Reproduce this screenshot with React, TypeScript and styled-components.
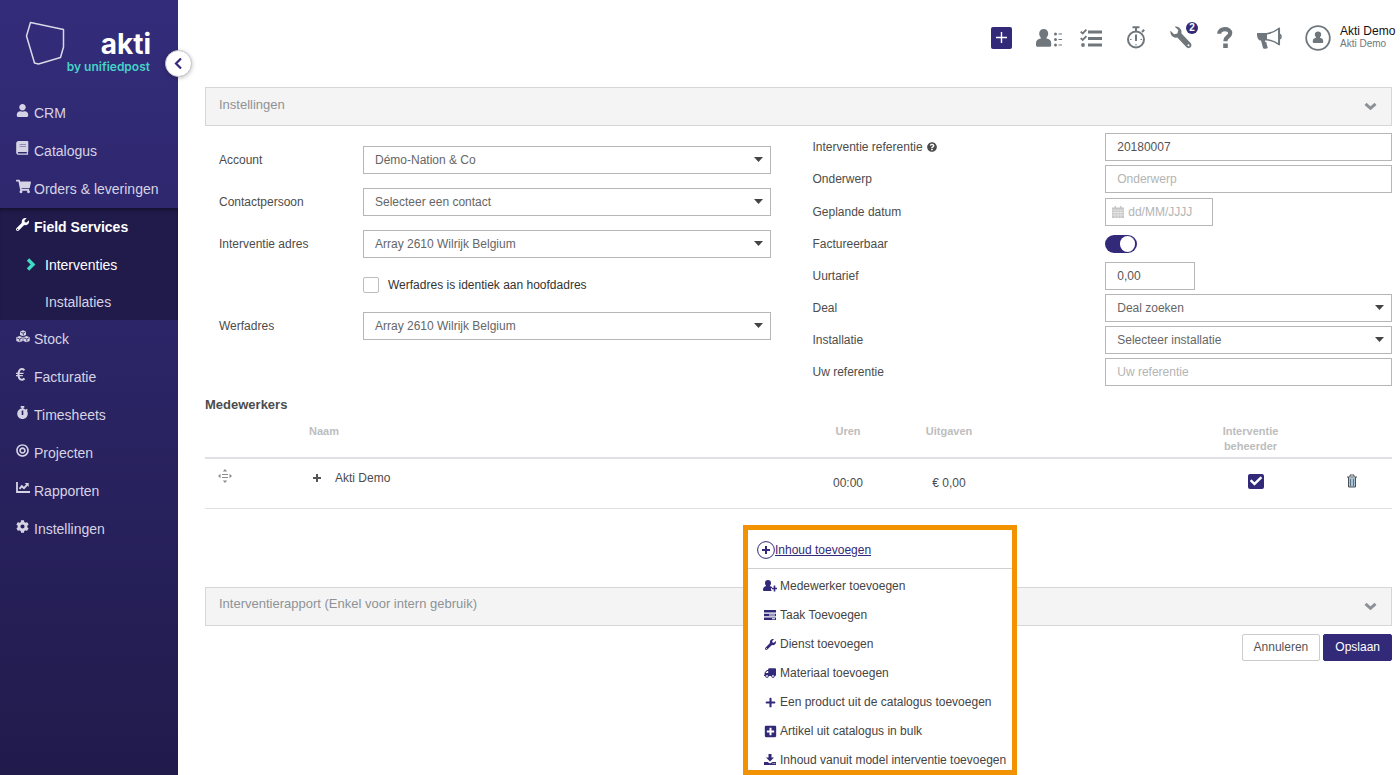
import React from "react";
import styled, { createGlobalStyle } from "styled-components";
import {
  FaUser,
  FaShoppingCart,
  FaWrench,
  FaStopwatch,
  FaBullseye,
  FaCog,
  FaTruck,
  FaPlus,
  FaPlusSquare,
  FaQuestionCircle,
  FaCheck,
} from "react-icons/fa";

const indigo = "#322a78";
const grey = "#6f777d";

const GlobalStyle = createGlobalStyle`
  *, *::before, *::after { box-sizing: border-box; }
  body {
    margin: 0;
    background: #fff;
    color: #4c4c4c;
    font-family: "Liberation Sans", Arial, sans-serif;
    font-size: 12px;
    line-height: 16px;
  }
  button, input, select { font: inherit; color: inherit; }
  button { cursor: pointer; }
`;

const Layout = styled.div`
  display: flex;
  min-height: 100vh;
`;

/* ---------- Sidebar ---------- */

const Sidebar = styled.aside`
  position: relative;
  flex: 0 0 178px;
  background: linear-gradient(#332c7a 0, #312a75 100px, #211b4c 100%);
`;

const Logo = styled.a`
  display: block;
  height: 94px;
`;

const LogoSvg = styled.svg`
  display: block;
`;

const CollapseButton = styled.button`
  position: absolute;
  top: 50px;
  right: -14px;
  width: 27px;
  height: 27px;
  display: grid;
  place-items: center;
  padding: 0;
  border: 1px solid #c4c4cc;
  border-radius: 50%;
  background: #fff;
  color: ${indigo};
  box-shadow: 0 1px 4px rgba(0, 0, 0, 0.25);
`;

const NavList = styled.ul`
  margin: 0;
  padding: 0;
  list-style: none;
`;

const NavGroup = styled.li<{ $active?: boolean }>`
  background: ${(p) => (p.$active ? "#211b4b" : "transparent")};
  box-shadow: ${(p) => (p.$active ? "inset 0 4px 4px -2px rgba(0, 0, 0, 0.4)" : "none")};
`;

const NavLink = styled.a<{ $active?: boolean }>`
  display: flex;
  align-items: center;
  height: 38px;
  padding-left: 16px;
  color: ${(p) => (p.$active ? "#fff" : "#d6d4e4")};
  font-size: 14px;
  font-weight: ${(p) => (p.$active ? "bold" : "normal")};
  text-decoration: none;
  white-space: nowrap;
`;

const NavIcon = styled.span`
  display: flex;
  width: 18px;
  padding-bottom: 6px;
  font-size: 13px;
`;

const SubLink = styled.a<{ $active?: boolean }>`
  display: flex;
  align-items: center;
  height: 37px;
  padding-left: 26px;
  color: ${(p) => (p.$active ? "#fff" : "#d6d4e4")};
  font-size: 14px;
  text-decoration: none;
`;

const SubMarker = styled.span`
  display: flex;
  width: 19px;
  color: #3fd9c6;
`;

/* ---------- Top bar ---------- */

const Main = styled.main`
  flex: 1;
  min-width: 0;
`;

const TopBar = styled.header`
  display: flex;
  justify-content: flex-end;
  align-items: center;
  height: 87px;
  padding: 0 5px 12px 0;
  color: ${grey};
`;

const TopButton = styled.button<{ $width: number; $gap: number }>`
  position: relative;
  display: flex;
  justify-content: center;
  width: ${(p) => p.$width}px;
  margin-right: ${(p) => p.$gap}px;
  padding: 0;
  border: 0;
  background: none;
`;

const AddButton = styled(TopButton)`
  height: 22px;
  align-items: center;
  border-radius: 2px;
  background: ${indigo};
`;

const Badge = styled.span`
  position: absolute;
  top: -4px;
  right: -6px;
  width: 12px;
  height: 12px;
  border-radius: 50%;
  background: ${indigo};
  color: #fff;
  font-size: 10px;
  font-weight: bold;
  line-height: 12px;
  text-align: center;
`;

const UserNames = styled.div`
  display: flex;
  flex-direction: column;
  width: 55px;
  padding-bottom: 2px;
  color: ${grey};
  font-size: 10px;
  line-height: 12px;
  white-space: nowrap;
`;

const UserName = styled.span`
  color: #111;
  font-size: 12px;
  line-height: 14px;
`;

/* ---------- Content ---------- */

const Content = styled.div`
  padding: 0 8px 0 27px;
`;

const PanelHeader = styled.button`
  display: flex;
  justify-content: space-between;
  align-items: center;
  width: 100%;
  height: 39px;
  padding: 0 14px 0 13px;
  border: 1px solid #d5d6d8;
  background: #f4f4f4;
  color: #8e9296;
  text-align: left;
  font-size: 13px;
`;

const PanelTitle = styled.span`
  padding-bottom: 4px;
`;

const FormGrid = styled.div`
  display: grid;
  grid-template-columns: 1fr 1fr;
  padding-top: 7px;
`;

const LeftColumn = styled.div`
  display: flex;
  flex-direction: column;
  gap: 14px;
  padding: 13px 28px 0 14px;
`;

const RightColumn = styled.div`
  display: flex;
  flex-direction: column;
  gap: 4px;
  padding-left: 14px;
`;

const LeftRow = styled.div`
  display: grid;
  grid-template-columns: 144px 1fr;
  align-items: center;
`;

const RightRow = styled.div`
  display: grid;
  grid-template-columns: 1fr 1fr;
  column-gap: 6px;
  align-items: center;
  min-height: 28px;
`;

const DateRow = styled(RightRow)`
  min-height: 29px;
  align-items: end;
`;

const Label = styled.label`
  display: flex;
  align-items: center;
  gap: 4px;
  line-height: 28px;
`;

const CheckLine = styled.div`
  grid-column: 2;
  display: flex;
  align-items: center;
  gap: 9px;
  height: 26px;
  color: #333;
`;

const CheckBox = styled.input`
  appearance: none;
  width: 16px;
  height: 16px;
  margin: 0;
  border: 1px solid #bdbdbd;
  border-radius: 2px;
  background: #fff;
`;

const SelectWrap = styled.div`
  position: relative;
  min-width: 0;
`;

const SelectBox = styled.select`
  appearance: none;
  display: block;
  width: 100%;
  height: 28px;
  padding: 0 28px 0 11px;
  border: 1px solid #b6b6b6;
  border-radius: 0;
  background: #fff;
  color: #666;
`;

const Caret = styled.svg`
  position: absolute;
  top: 11px;
  right: 8px;
  pointer-events: none;
`;

const TextBox = styled.input<{ $width?: number }>`
  width: ${(p) => (p.$width ? `${p.$width}px` : "100%")};
  height: 28px;
  padding: 0 11px;
  border: 1px solid #b6b6b6;
  border-radius: 0;
  background: #fff;
  color: #555;
  &::placeholder { color: #b4b4b4; opacity: 1; }
`;

const DateBox = styled.div`
  display: flex;
  align-items: center;
  gap: 4px;
  width: 108px;
  height: 28px;
  padding: 0 6px;
  border: 1px solid #b6b6b6;
`;

const DateInput = styled.input`
  flex: 1;
  min-width: 0;
  padding: 0;
  border: 0;
  outline: 0;
  background: none;
  &::placeholder { color: #b4b4b4; opacity: 1; }
`;

const Switch = styled.input`
  appearance: none;
  display: flex;
  align-items: center;
  justify-content: flex-end;
  width: 32px;
  height: 18px;
  margin: 0;
  padding: 0 2px;
  border-radius: 9px;
  background: ${indigo};
  &::before {
    content: "";
    width: 15px;
    height: 16px;
    border-radius: 8px;
    background: #fff;
  }
  &:not(:checked) {
    justify-content: flex-start;
    background: #bbb;
  }
`;

/* ---------- Staff table ---------- */

const SectionTitle = styled.h2`
  margin: 11px 0 0;
  font-size: 13px;
  line-height: 16px;
`;

const Table = styled.table`
  width: 100%;
  margin-top: 7px;
  border-collapse: collapse;
  table-layout: fixed;
`;

const Th = styled.th<{ $left?: boolean }>`
  padding: 4px 0 3px;
  border-bottom: 2px solid #dfdfe4;
  color: #bdbdbd;
  font-size: 11px;
  line-height: 15px;
  text-align: ${(p) => (p.$left ? "left" : "center")};
  vertical-align: top;
`;

const Td = styled.td`
  height: 50px;
  padding: 0;
  border-bottom: 1px solid #dfdfe4;
  text-align: center;
  vertical-align: middle;
`;

const DragTd = styled(Td)`
  padding: 0 0 10px 12px;
  text-align: left;
`;

const NameTd = styled(Td)`
  padding: 0 0 11px 4px;
  text-align: left;
`;

const NameLine = styled.div`
  display: flex;
  align-items: center;
  gap: 14px;
`;

const IconButton = styled.button`
  display: inline-flex;
  padding: 0;
  border: 0;
  background: none;
  color: #555;
`;

const ManagerTd = styled(Td)`
  padding-left: 11px;
`;

const ManagerLabel = styled.label`
  position: relative;
  display: inline-grid;
  color: #fff;
`;

const ManagerCheck = styled.input`
  appearance: none;
  width: 16px;
  height: 15px;
  margin: 0;
  border-radius: 2px;
  background: ${indigo};
`;

const CheckMark = styled.span`
  position: absolute;
  top: 1px;
  left: 2px;
  display: flex;
  font-size: 12px;
  pointer-events: none;
`;

/* ---------- Add-content menu ---------- */

const MenuAnchor = styled.div`
  position: relative;
  height: 78px;
`;

const Menu = styled.div`
  position: absolute;
  z-index: 2;
  top: 16px;
  left: 538px;
  width: 274px;
  border: 5px solid #f39200;
  background: #fff;
`;

const MenuToggle = styled.button`
  display: flex;
  align-items: center;
  width: 100%;
  height: 39px;
  padding: 2px 9px 0;
  border: 0;
  border-bottom: 1px solid #d0d0d4;
  background: none;
  color: ${indigo};
  text-decoration: underline;
`;

const MenuList = styled.ul`
  display: flex;
  flex-direction: column;
  gap: 12px;
  margin: 0;
  padding: 9px 0 1px;
  list-style: none;
`;

const MenuAction = styled.button`
  display: flex;
  align-items: center;
  gap: 3px;
  width: 100%;
  height: 17px;
  padding: 0 0 0 15px;
  border: 0;
  background: none;
  color: #444;
  white-space: nowrap;
`;

const MenuIcon = styled.span`
  display: flex;
  justify-content: center;
  width: 14px;
  color: ${indigo};
  font-size: 12px;
`;

const MirroredTruck = styled(FaTruck)`
  transform: scaleX(-1);
`;

const Actions = styled.div`
  display: flex;
  justify-content: flex-end;
  gap: 3px;
  padding-top: 8px;
`;

const ActionButton = styled.button<{ $primary?: boolean }>`
  height: 27px;
  padding: 0 11px;
  border: 1px solid ${(p) => (p.$primary ? indigo : "#ccc")};
  border-radius: 2px;
  background: ${(p) => (p.$primary ? indigo : "#fff")};
  color: ${(p) => (p.$primary ? "#fff" : "#555")};
`;

/* ---------- Drawn icons ---------- */

const ChevronDown = () => (
  <svg width="13" height="9" viewBox="0 0 13 9">
    <path d="M1.500 1.800 6.500 6.300 11.500 1.800" fill="none" stroke="#8b9196" strokeWidth="3" />
  </svg>
);

const ChevronRight = () => (
  <svg width="10" height="13" viewBox="0 0 10 13">
    <path d="M2 1.500 7 6.500 2 11.500" fill="none" stroke="currentColor" strokeWidth="3.400" />
  </svg>
);

const ChevronLeft = () => (
  <svg width="9" height="13" viewBox="0 0 9 13">
    <path d="M7 1.500 2 6.500 7 11.500" fill="none" stroke="currentColor" strokeWidth="2.200" />
  </svg>
);

const BookIcon = () => (
  <svg width="13" height="14" viewBox="0 0 13 14" fill="currentColor">
    <path
      fillRule="evenodd"
      d="M2.500 0H11.500c.5 0 .8.300.8.800v9.400c0 .3-.1.500-.4.600v1.700c.3 0 .4.200.4.500 0 .5-.3.800-.8.800H2.500C1.200 13.800.2 12.800.2 11.500V2.300C.2 1 1.200 0 2.500 0Zm0 11c-.9 0-.9 1.500 0 1.500h8.300V11Z"
    />
    <path d="M3.500 3h6.500v1H3.500zM3.500 5h6.500v1H3.500z" fill="#8f8bb5" />
  </svg>
);

const CubesIcon = () => (
  <svg width="14" height="13" viewBox="0 0 14 13">
    <path
      d="M7 .3 10 1.500V5L7 6.300 4 5V1.500ZM3.500 6 6.700 7.300v3.600L3.500 12.300.3 10.900V7.300ZM10.500 6l3.200 1.300v3.600l-3.200 1.400-3.200-1.400V7.300Z"
      fill="currentColor"
    />
    <path d="M4.500 2 7 3.100 9.500 2M7.300 3.200v2.300M1 7.900l2.500 1.100L6 7.900M3.800 9v2.500M8 7.900 10.500 9 13 7.900M10.800 9v2.500" fill="none" stroke="#2c2569" strokeWidth=".8" />
  </svg>
);

const EuroIcon = () => (
  <svg width="9" height="13" viewBox="0 0 9 13" fill="none" stroke="currentColor">
    <path d="M8.500 2.300C7.600 1.300 6.600 1 5.800 1 3.700 1 2.500 3.200 2.500 6.300s1.200 5.500 3.300 5.500c1 0 1.800-.4 2.700-1.300" strokeWidth="2" />
    <path d="M0 5.300h7.500M0 7.600h6.800" strokeWidth="1.200" />
  </svg>
);

const ChartIcon = () => (
  <svg width="14" height="12" viewBox="0 0 14 12" fill="none" stroke="currentColor">
    <path d="M1 0v10h13" strokeWidth="1.800" />
    <path d="M3.500 6.800 5.800 4.200 8 6.200l3.200-3.500" strokeWidth="1.900" />
    <path d="M8.700 1H12.700v4Z" fill="currentColor" stroke="none" />
  </svg>
);

const ContactsIcon = () => (
  <svg width="27" height="18" viewBox="0 0 27 18" fill={grey}>
    <path d="M7.700 0C10.300 0 12.200 1.900 12.200 4.500c0 1.600-.7 3-1.700 3.900v1c3 .6 4.700 2 4.700 4.600v2.500c0 .8-.5 1.200-1.200 1.200H1.200C.5 17.700 0 17.300 0 16.500V14c0-2.600 1.800-4 4.800-4.600v-1c-1-.9-1.600-2.300-1.600-3.900C3.200 1.900 5.100 0 7.700 0Z" />
    <circle cx="19.500" cy="5" r="1.500" />
    <circle cx="19.500" cy="10.500" r="1.500" />
    <circle cx="19.500" cy="16" r="1.500" />
    <path d="M22.500 4.500H26v1h-3.500zM22.500 10H26v1h-3.500zM22.500 15.500H26v1h-3.500z" />
  </svg>
);

const ChecklistIcon = () => (
  <svg width="22" height="18" viewBox="0 0 22 18">
    <path d="M8 1.500h14v3H8zM8 8h14v3H8zM8 14.500h14v3H8z" fill={grey} />
    <circle cx="3" cy="16" r="1.900" fill={grey} />
    <path d="M.7 2.600l2 1.800L6.400.7M.7 9.100l2 1.800 3.700-3.700" fill="none" stroke={grey} strokeWidth="1.900" />
  </svg>
);

const TimerIcon = () => (
  <svg width="20" height="23" viewBox="0 0 20 23" fill="none" stroke={grey} strokeWidth="2">
    <circle cx="10" cy="13.500" r="8" />
    <path d="M6.500 1.200h7M10 1.500V5M16 6l2.200-2.200" />
    <path d="M10 8.500v6.500" />
    <path d="M4 13.500h1.500M14.500 13.500H16M10 18v1.500" strokeWidth="1" />
  </svg>
);

const ServiceIcon = () => (
  <svg width="22" height="23" viewBox="0 0 22 23" fill={grey}>
    <path
      fillRule="evenodd"
      d="M4.500.6C7.500-.2 10.500 1.600 11.300 4.500c.2 1 .2 1.900 0 2.800l9.300 9.800c1.100 1.200 1.100 3 0 4.200-1.200 1.100-3 1.100-4.100 0L7.300 11.600c-.9.2-1.800.2-2.700-.1C1.700 10.600-.1 7.700.5 4.800l3.600 3.500 3.300-.9.900-3.300L4.500.6Zm14 17.600a1 1 0 1 0 0 2 1 1 0 0 0 0-2Z"
    />
  </svg>
);

const QuestionIcon = () => (
  <svg width="16" height="21" viewBox="0 0 16 21">
    <path
      d="M2.200 6.800C2.200 3.700 4.700 2.200 7.800 2.200c3.200 0 5.400 1.500 5.400 4 0 3.300-4.700 3.500-4.700 7.300v.8"
      fill="none"
      stroke={grey}
      strokeWidth="4.200"
    />
    <path d="M6.200 16.500h4.600V21H6.200z" fill={grey} />
  </svg>
);

const MegaphoneIcon = () => (
  <svg width="26" height="22" viewBox="0 0 26 22">
    <path d="M1 6h10v7.500H9l.2 1.500 1.500.5-.2 1 1.300 4.500c-1 1-3.500 1-4.700.2L5 13.500H3.800C2 12.500.6 9.500 1 6Z" fill={grey} />
    <path d="M11 6.700C15.500 6 19.500 4 22.800 1.500v15.800C19.500 15 15.500 13.400 11 12.700" fill="none" stroke={grey} strokeWidth="1.500" />
    <path d="M23.300 1v17M23.500 7.500c2 0 2 4.200 0 4.200" fill="none" stroke={grey} strokeWidth="1.500" />
  </svg>
);

const AvatarIcon = () => (
  <svg width="26" height="26" viewBox="0 0 26 26">
    <circle cx="13" cy="13" r="11.800" fill="none" stroke={grey} strokeWidth="1.800" />
    <path
      d="M13 6.500c1.900 0 3.200 1.300 3.200 3.100 0 1.100-.5 2-1.200 2.600v.6c2 .4 3.200 1.500 3.200 3.200v1.300c0 .5-.3.800-.8.800H8.600c-.5 0-.8-.3-.8-.8V16c0-1.700 1.200-2.800 3.200-3.200v-.6c-.7-.6-1.200-1.500-1.200-2.600 0-1.800 1.300-3.100 3.200-3.100Z"
      fill={grey}
    />
  </svg>
);

const CalendarIcon = () => (
  <svg width="12" height="12" viewBox="0 0 12 12">
    <path d="M0 1.500h12V12H0zM2.500 0h1.500v2H2.500zM8 0h1.500v2H8z" fill="#c6c6c6" />
    <path d="M0 4h12M0 6.500h12M0 9h12M3 4v8M6 4v8M9 4v8" stroke="#f1f1f1" strokeWidth=".6" />
  </svg>
);

const DragIcon = () => (
  <svg width="16" height="16" viewBox="0 0 16 16" fill="#8c8c8c">
    <path d="M8 1l2.200 2.500H5.800zM8 15l2.200-2.500H5.800zM1 8l2.500-2.200v4.400zM15 8l-2.500-2.200v4.400z" />
    <path d="M5 6h6v1H5zM5 9h6v1H5z" />
  </svg>
);

const TrashIcon = () => (
  <svg width="12" height="14" viewBox="0 0 12 14">
    <path d="M2 4h8v9H2z" fill="#a9c3d6" />
    <path d="M1 3h10M4 2.500v-1.500h4v1.500M2.500 3v10h7V3" fill="none" stroke="#4d5055" />
    <path d="M4.500 5v7M7.500 5v7" stroke="#5f7486" />
  </svg>
);

const UserPlusIcon = () => (
  <svg width="14" height="12" viewBox="0 0 14 12" fill={indigo}>
    <path d="M5 0c1.900 0 3 1.300 3 3 0 1.300-.5 2.300-1.200 2.900.8.300 1.700.5 2.200 1V8H8v2.500h1V11H1.200C.4 11 0 10.600 0 9.700 0 7.500 1.300 6.500 3.200 5.900 2.500 5.300 2 4.300 2 3c0-1.700 1.100-3 3-3Z" />
    <path d="M10.700 5.500h1.600v2.200H14v1.600h-1.700v2.200h-1.600V9.300H8.800V7.700h1.900z" />
  </svg>
);

const TaskBarsIcon = () => (
  <svg width="12" height="10" viewBox="0 0 12 10" fill={indigo}>
    <path fillRule="evenodd" d="M0 0h12v2.600H0zM0 3.700h12v2.600H0zM5 4.500v1h6v-1zM0 7.400h12V10H0zM8 8.200v1h3v-1z" />
  </svg>
);

const ImportIcon = () => (
  <svg width="12" height="12" viewBox="0 0 12 12" fill={indigo}>
    <path d="M4.500 0h3v3.500H10L6 7.500 2 3.500h2.500z" />
    <path fillRule="evenodd" d="M0 8h3.500L6 9.500 8.500 8H12v3H0zM8.500 9.200v.8h1v-.8zM10.200 9.200v.8h1v-.8z" />
  </svg>
);

const CirclePlusIcon = () => (
  <svg width="18" height="18" viewBox="0 0 18 18" fill="none" stroke={indigo}>
    <circle cx="9" cy="9" r="8.400" />
    <path d="M9 5v8M5 9h8" strokeWidth="2" />
  </svg>
);

/* ---------- Composition ---------- */

const navBefore = [
  { icon: <FaUser />, text: "CRM" },
  { icon: <BookIcon />, text: "Catalogus" },
  { icon: <FaShoppingCart size={15} />, text: "Orders & leveringen" },
];

const navAfter = [
  { icon: <CubesIcon />, text: "Stock" },
  { icon: <EuroIcon />, text: "Facturatie" },
  { icon: <FaStopwatch />, text: "Timesheets" },
  { icon: <FaBullseye />, text: "Projecten" },
  { icon: <ChartIcon />, text: "Rapporten" },
  { icon: <FaCog />, text: "Instellingen" },
];

const menuItems = [
  { icon: <UserPlusIcon />, text: "Medewerker toevoegen" },
  { icon: <TaskBarsIcon />, text: "Taak Toevoegen" },
  { icon: <FaWrench size={11} />, text: "Dienst toevoegen" },
  { icon: <MirroredTruck />, text: "Materiaal toevoegen" },
  { icon: <FaPlus size={11} />, text: "Een product uit de catalogus toevoegen" },
  { icon: <FaPlusSquare size={13} />, text: "Artikel uit catalogus in bulk" },
  { icon: <ImportIcon />, text: "Inhoud vanuit model interventie toevoegen" },
];

type NavEntry = { icon: React.ReactNode; text: string };

const NavEntries = ({ items }: { items: NavEntry[] }) => (
  <>
    {items.map((item) => (
      <NavGroup key={item.text}>
        <NavLink href="#">
          <NavIcon>{item.icon}</NavIcon>
          {item.text}
        </NavLink>
      </NavGroup>
    ))}
  </>
);

const Select = ({ id, value }: { id: string; value: string }) => (
  <SelectWrap>
    <SelectBox id={id} defaultValue={value}>
      <option>{value}</option>
    </SelectBox>
    <Caret width="9" height="5" viewBox="0 0 9 5">
      <path d="M0 0h9L4.500 5z" fill="#444" />
    </Caret>
  </SelectWrap>
);

const Panel = ({ title }: { title: string }) => (
  <PanelHeader type="button">
    <PanelTitle>{title}</PanelTitle>
    <ChevronDown />
  </PanelHeader>
);

export default function App() {
  return (
    <>
      <GlobalStyle />
      <Layout>
        <Sidebar>
          <Logo href="#" aria-label="akti by unifiedpost">
            <LogoSvg width="178" height="94" viewBox="0 0 178 94">
              <path
                d="M30.500 22.500 63.500 29.500V47L60.500 57.500 38.500 64 34.500 63 26.500 36Z"
                fill="none"
                stroke="#d9d8e8"
                strokeWidth="1.500"
                strokeLinejoin="round"
              />
              <text x="151" y="54" textAnchor="end" fill="#fff" fontFamily="Inter, sans-serif" fontWeight="700" fontSize="28">
                akti
              </text>
              <text x="150" y="71" textAnchor="end" fill="#45d3c6" fontFamily="Inter, sans-serif" fontWeight="600" fontSize="12">
                by unifiedpost
              </text>
            </LogoSvg>
          </Logo>
          <CollapseButton type="button" aria-label="Menu inklappen">
            <ChevronLeft />
          </CollapseButton>
          <nav>
            <NavList>
              <NavEntries items={navBefore} />
              <NavGroup $active>
                <NavLink href="#" $active>
                  <NavIcon>
                    <FaWrench />
                  </NavIcon>
                  Field Services
                </NavLink>
                <SubLink href="#" $active>
                  <SubMarker>
                    <ChevronRight />
                  </SubMarker>
                  Interventies
                </SubLink>
                <SubLink href="#">
                  <SubMarker />
                  Installaties
                </SubLink>
              </NavGroup>
              <NavEntries items={navAfter} />
            </NavList>
          </nav>
        </Sidebar>

        <Main>
          <TopBar>
            <AddButton type="button" $width={21} $gap={24} aria-label="Toevoegen">
              <svg width="11" height="11" viewBox="0 0 11 11">
                <path d="M5.500 0v11M0 5.500h11" stroke="#fff" strokeWidth="1.400" />
              </svg>
            </AddButton>
            <TopButton type="button" $width={27} $gap={17} aria-label="Contacten">
              <ContactsIcon />
            </TopButton>
            <TopButton type="button" $width={22} $gap={24} aria-label="Taken">
              <ChecklistIcon />
            </TopButton>
            <TopButton type="button" $width={20} $gap={24} aria-label="Timer">
              <TimerIcon />
            </TopButton>
            <TopButton type="button" $width={22} $gap={24} aria-label="Interventies">
              <ServiceIcon />
              <Badge>2</Badge>
            </TopButton>
            <TopButton type="button" $width={18} $gap={22} aria-label="Help">
              <QuestionIcon />
            </TopButton>
            <TopButton type="button" $width={26} $gap={23} aria-label="Nieuws">
              <MegaphoneIcon />
            </TopButton>
            <TopButton type="button" $width={26} $gap={9} aria-label="Profiel">
              <AvatarIcon />
            </TopButton>
            <UserNames>
              <UserName>Akti Demo</UserName>
              <span>Akti Demo</span>
            </UserNames>
          </TopBar>

          <Content>
            <Panel title="Instellingen" />
            <FormGrid>
              <LeftColumn>
                <LeftRow>
                  <Label htmlFor="account">Account</Label>
                  <Select id="account" value="Démo-Nation & Co" />
                </LeftRow>
                <LeftRow>
                  <Label htmlFor="contact">Contactpersoon</Label>
                  <Select id="contact" value="Selecteer een contact" />
                </LeftRow>
                <LeftRow>
                  <Label htmlFor="adres">Interventie adres</Label>
                  <Select id="adres" value="Array 2610 Wilrijk Belgium" />
                </LeftRow>
                <LeftRow>
                  <CheckLine>
                    <CheckBox type="checkbox" id="identiek" />
                    <label htmlFor="identiek">Werfadres is identiek aan hoofdadres</label>
                  </CheckLine>
                </LeftRow>
                <LeftRow>
                  <Label htmlFor="werfadres">Werfadres</Label>
                  <Select id="werfadres" value="Array 2610 Wilrijk Belgium" />
                </LeftRow>
              </LeftColumn>
              <RightColumn>
                <RightRow>
                  <Label htmlFor="referentie">
                    Interventie referentie <FaQuestionCircle size={10} />
                  </Label>
                  <TextBox id="referentie" defaultValue="20180007" />
                </RightRow>
                <RightRow>
                  <Label htmlFor="onderwerp">Onderwerp</Label>
                  <TextBox id="onderwerp" placeholder="Onderwerp" />
                </RightRow>
                <DateRow>
                  <Label htmlFor="datum">Geplande datum</Label>
                  <DateBox>
                    <CalendarIcon />
                    <DateInput id="datum" placeholder="dd/MM/JJJJ" />
                  </DateBox>
                </DateRow>
                <RightRow>
                  <Label htmlFor="factureerbaar">Factureerbaar</Label>
                  <Switch type="checkbox" role="switch" id="factureerbaar" defaultChecked />
                </RightRow>
                <RightRow>
                  <Label htmlFor="uurtarief">Uurtarief</Label>
                  <TextBox id="uurtarief" defaultValue="0,00" $width={90} />
                </RightRow>
                <RightRow>
                  <Label htmlFor="deal">Deal</Label>
                  <Select id="deal" value="Deal zoeken" />
                </RightRow>
                <RightRow>
                  <Label htmlFor="installatie">Installatie</Label>
                  <Select id="installatie" value="Selecteer installatie" />
                </RightRow>
                <RightRow>
                  <Label htmlFor="uwreferentie">Uw referentie</Label>
                  <TextBox id="uwreferentie" placeholder="Uw referentie" />
                </RightRow>
              </RightColumn>
            </FormGrid>

            <SectionTitle>Medewerkers</SectionTitle>
            <Table>
              <colgroup>
                <col width="104" />
                <col />
                <col width="100" />
                <col width="102" />
                <col width="190" />
                <col width="121" />
                <col width="81" />
              </colgroup>
              <thead>
                <tr>
                  <Th />
                  <Th $left>Naam</Th>
                  <Th>Uren</Th>
                  <Th>Uitgaven</Th>
                  <Th />
                  <Th>
                    Interventie
                    <br />
                    beheerder
                  </Th>
                  <Th />
                </tr>
              </thead>
              <tbody>
                <tr>
                  <DragTd>
                    <IconButton type="button" aria-label="Verplaatsen">
                      <DragIcon />
                    </IconButton>
                  </DragTd>
                  <NameTd>
                    <NameLine>
                      <IconButton type="button" aria-label="Uitklappen">
                        <svg width="8" height="8" viewBox="0 0 8 8">
                          <path d="M4 0v8M0 4h8" stroke="#555" strokeWidth="2" />
                        </svg>
                      </IconButton>
                      Akti Demo
                    </NameLine>
                  </NameTd>
                  <Td>00:00</Td>
                  <Td>€ 0,00</Td>
                  <Td />
                  <ManagerTd>
                    <ManagerLabel>
                      <ManagerCheck type="checkbox" defaultChecked aria-label="Interventie beheerder" />
                      <CheckMark>
                        <FaCheck />
                      </CheckMark>
                    </ManagerLabel>
                  </ManagerTd>
                  <Td>
                    <IconButton type="button" aria-label="Verwijderen">
                      <TrashIcon />
                    </IconButton>
                  </Td>
                </tr>
              </tbody>
            </Table>

            <MenuAnchor>
              <Menu>
                <MenuToggle type="button">
                  <CirclePlusIcon />
                  Inhoud toevoegen
                </MenuToggle>
                <MenuList>
                  {menuItems.map((item) => (
                    <li key={item.text}>
                      <MenuAction type="button">
                        <MenuIcon>{item.icon}</MenuIcon>
                        {item.text}
                      </MenuAction>
                    </li>
                  ))}
                </MenuList>
              </Menu>
            </MenuAnchor>

            <Panel title="Interventierapport (Enkel voor intern gebruik)" />
            <Actions>
              <ActionButton type="button">Annuleren</ActionButton>
              <ActionButton type="button" $primary>
                Opslaan
              </ActionButton>
            </Actions>
          </Content>
        </Main>
      </Layout>
    </>
  );
}
